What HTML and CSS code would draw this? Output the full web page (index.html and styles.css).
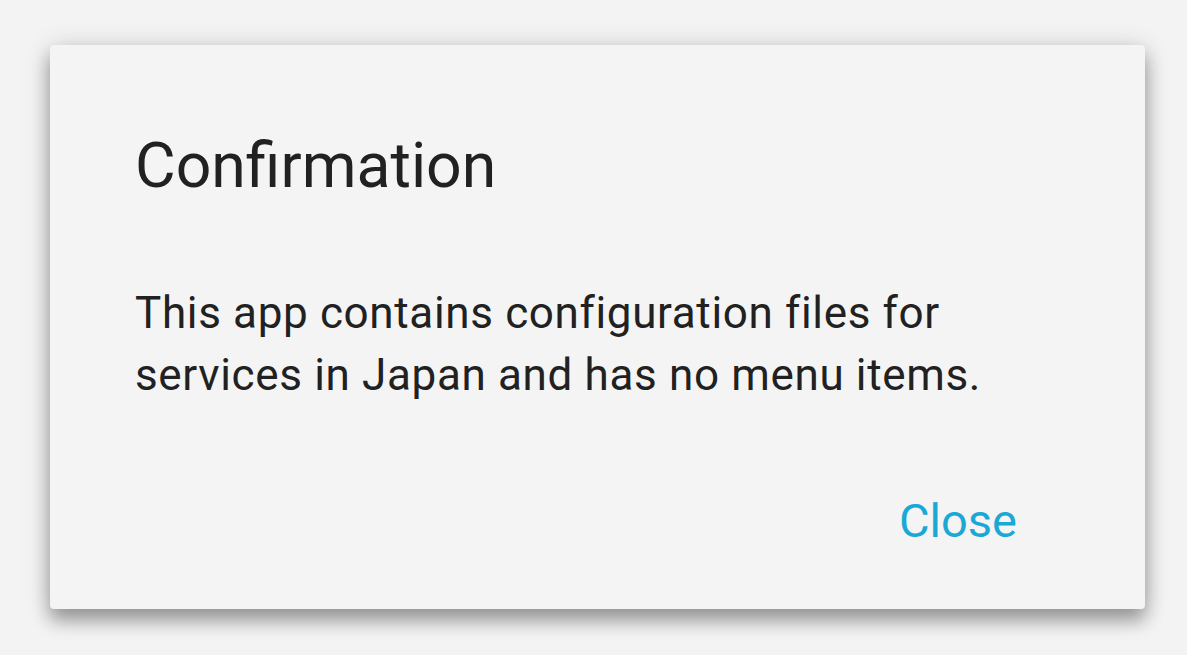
FILE: index.html
```html
<!DOCTYPE html>
<html>
<head>
<meta charset="utf-8">
<link rel="stylesheet" href="styles.css">
</head>
<body>
<div class="page">
  <div class="dialog">
    <h1 class="title">Confirmation</h1>
    <p class="message">This app contains configuration files for<br>services in Japan and has no menu items.</p>
    <div class="actions">
      <button class="btn">Close</button>
    </div>
  </div>
</div>
</body>
</html>
```
FILE: styles.css
```css
html, body {
  margin: 0;
  padding: 0;
  background: #f3f3f3;
}
body {
  font-family: Roboto, "Noto Sans", sans-serif;
  width: 1187px;
  height: 655px;
  overflow: hidden;
}
.page {
  padding: 45px 42px 0 50px;
}
.dialog {
  width: 1095px;
  height: 564px;
  box-sizing: border-box;
  background: #f4f4f4;
  border-radius: 4px;
  box-shadow: 0 12px 18px rgba(0,0,0,0.32), 0 2px 26px rgba(0,0,0,0.16);
  padding: 83px 128px 0 85px;
  display: flex;
  flex-direction: column;
}
.title {
  margin: 0;
  font-size: 62.5px;
  line-height: 76px;
  font-weight: 400;
  color: #212121;
}
.message {
  margin: 78px 0 0;
  font-size: 44px;
  line-height: 62px;
  letter-spacing: 0.65px;
  color: #212121;
}
.actions {
  margin-top: 87px;
  display: flex;
  justify-content: flex-end;
}
.btn {
  border: 0;
  background: transparent;
  padding: 0;
  font-family: Roboto, sans-serif;
  font-size: 47px;
  line-height: 56px;
  color: #1aa8d6;
}
```
